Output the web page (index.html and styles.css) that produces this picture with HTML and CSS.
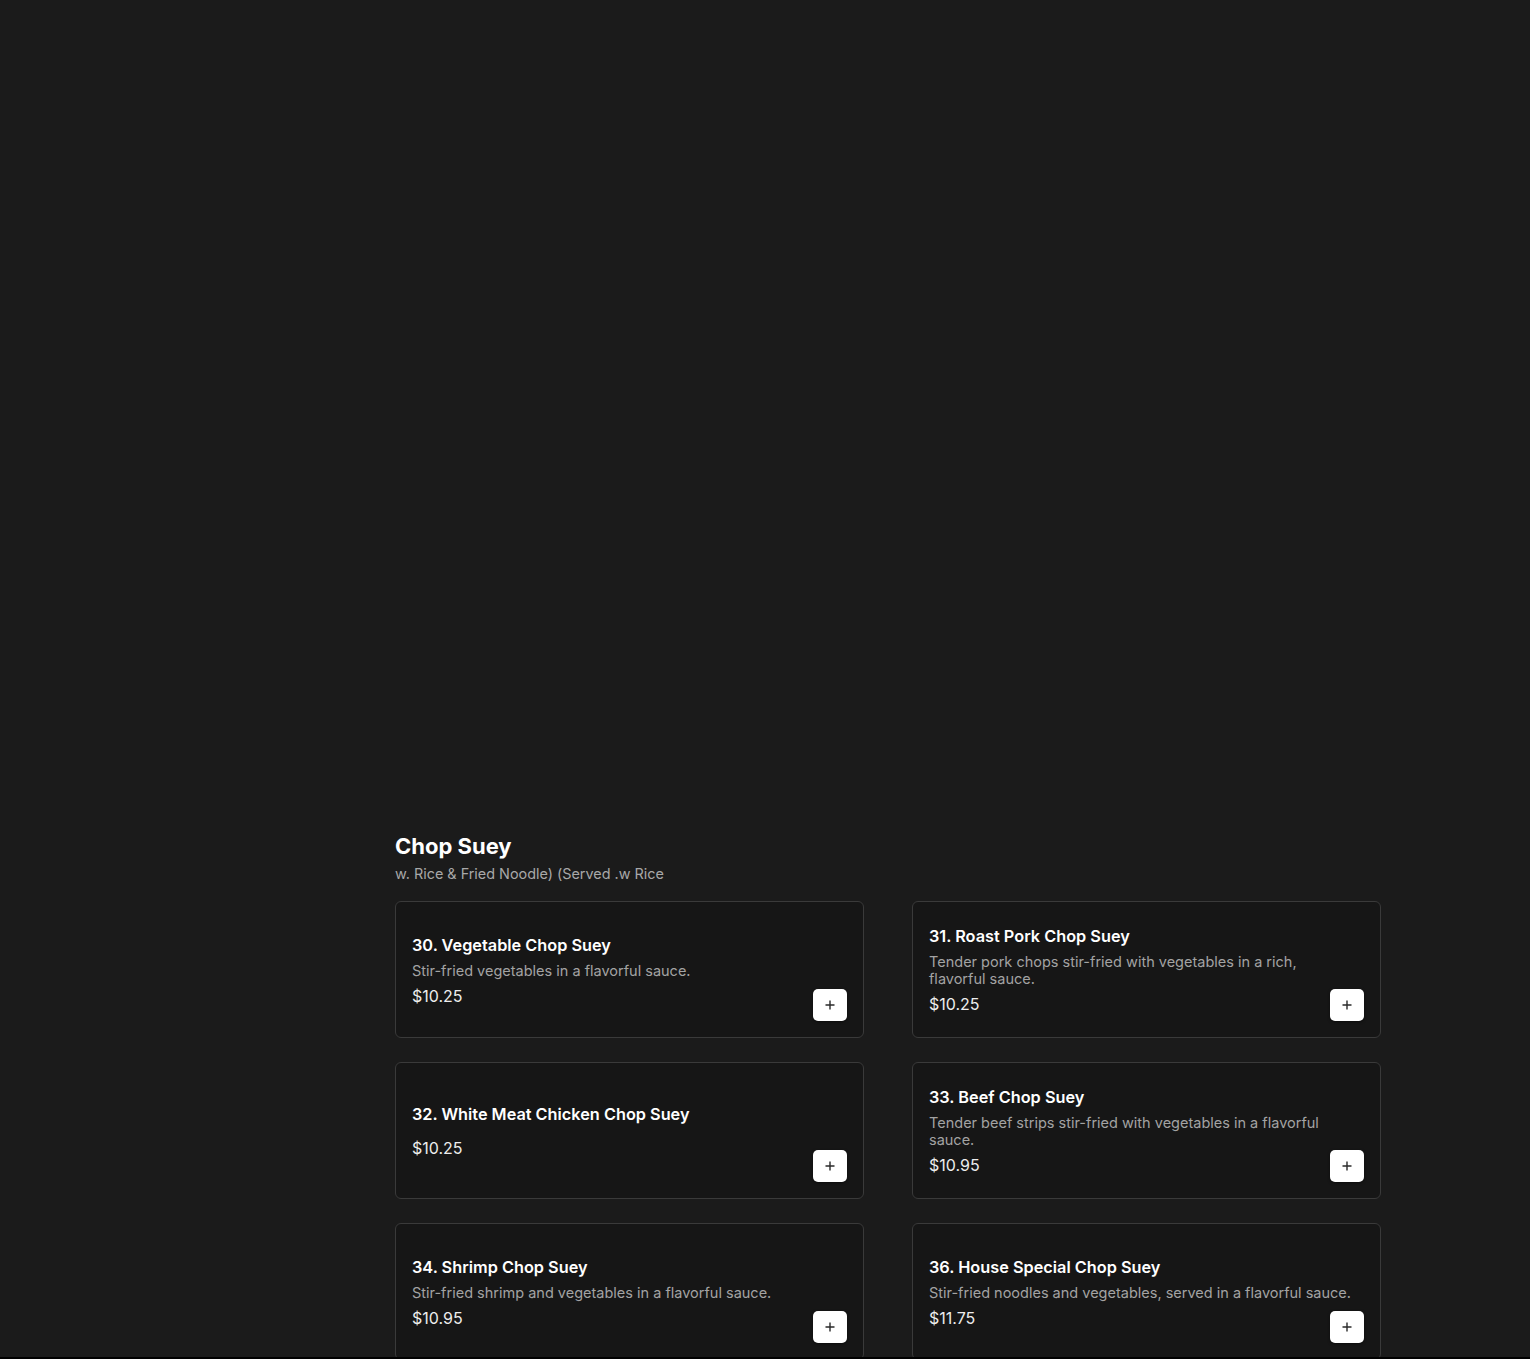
FILE: index.html
```html
<!DOCTYPE html>
<html lang="en">
<head>
  <meta charset="UTF-8" />
  <meta name="viewport" content="width=device-width, initial-scale=1" />
  <title>Chop Suey</title>
  <link rel="stylesheet" href="styles.css">
</head>
<body>
  <div class="page">
    <!-- left column (empty on this view) -->
    <aside class="side"></aside>

    <main class="content">
      <!-- Banner (image not loaded) -->
      <div class="hero"></div>

      <section class="menu-section">
        <h2 class="section-title">Chop Suey</h2>
        <p class="section-note">w. Rice &amp; Fried Noodle) (Served .w Rice</p>

        <div class="menu-grid">
          <div class="menu-card">
            <div class="item-info">
              <h3 class="item-name">30. Vegetable Chop Suey</h3>
              <p class="item-desc">Stir-fried vegetables in a flavorful sauce.</p>
              <div class="item-price">$10.25</div>
            </div>
            <button class="add-btn" aria-label="Add"><svg viewBox="0 0 12 12" width="12" height="12"><path d="M6 1.5v9M1.5 6h9" /></svg></button>
          </div>

          <div class="menu-card">
            <div class="item-info">
              <h3 class="item-name">31. Roast Pork Chop Suey</h3>
              <p class="item-desc">Tender pork chops stir-fried with vegetables in a rich, flavorful sauce.</p>
              <div class="item-price">$10.25</div>
            </div>
            <button class="add-btn" aria-label="Add"><svg viewBox="0 0 12 12" width="12" height="12"><path d="M6 1.5v9M1.5 6h9" /></svg></button>
          </div>

          <div class="menu-card">
            <div class="item-info">
              <h3 class="item-name">32. White Meat Chicken Chop Suey</h3>
              <p class="item-desc"></p>
              <div class="item-price">$10.25</div>
            </div>
            <button class="add-btn" aria-label="Add"><svg viewBox="0 0 12 12" width="12" height="12"><path d="M6 1.5v9M1.5 6h9" /></svg></button>
          </div>

          <div class="menu-card">
            <div class="item-info">
              <h3 class="item-name">33. Beef Chop Suey</h3>
              <p class="item-desc">Tender beef strips stir-fried with vegetables in a flavorful sauce.</p>
              <div class="item-price">$10.95</div>
            </div>
            <button class="add-btn" aria-label="Add"><svg viewBox="0 0 12 12" width="12" height="12"><path d="M6 1.5v9M1.5 6h9" /></svg></button>
          </div>

          <div class="menu-card">
            <div class="item-info">
              <h3 class="item-name">34. Shrimp Chop Suey</h3>
              <p class="item-desc">Stir-fried shrimp and vegetables in a flavorful sauce.</p>
              <div class="item-price">$10.95</div>
            </div>
            <button class="add-btn" aria-label="Add"><svg viewBox="0 0 12 12" width="12" height="12"><path d="M6 1.5v9M1.5 6h9" /></svg></button>
          </div>

          <div class="menu-card">
            <div class="item-info">
              <h3 class="item-name">36. House Special Chop Suey</h3>
              <p class="item-desc">Stir-fried noodles and vegetables, served in a flavorful sauce.</p>
              <div class="item-price">$11.75</div>
            </div>
            <button class="add-btn" aria-label="Add"><svg viewBox="0 0 12 12" width="12" height="12"><path d="M6 1.5v9M1.5 6h9" /></svg></button>
          </div>
        </div>
      </section>
    </main>
  </div>

  <div class="bottom-edge"></div>
</body>
</html>
```

FILE: styles.css
```css
/* dark page */
body {
  margin: 0;
  background-color: #1b1b1b;
  color: #fff;
  font-family: Inter, "Noto Sans", sans-serif;
}
.page {
  display: flex;
}
.side {
  flex: 0 0 246px;
}
.content {
  flex: 1;
}
.hero {
  height: 832px;
}
/* section */
.menu-section {
  width: 986px;
  margin: 0 auto;
  padding-bottom: 40px;
}
.section-title {
  margin: 0;
  font-size: 22px;
  font-weight: 700;
  line-height: 28px;
}
.section-note {
  margin: 4px 0 0;
  font-size: 14.4px;
  line-height: 20px;
  color: #a8a8a8;
}
.menu-grid {
  display: grid;
  grid-template-columns: 1fr 1fr;
  column-gap: 48px;
  row-gap: 24px;
  margin-top: 17px;
}
/* card */
.menu-card {
  position: relative;
  display: flex;
  height: 137px;
  box-sizing: border-box;
  padding: 16px;
  background-color: #161616;
  border: 1px solid #3a3a3a;
  border-radius: 6px;
}
.item-info {
  flex: 1;
  display: flex;
  flex-direction: column;
  justify-content: center;
  padding-right: 10px;
}
.item-name {
  margin: 0;
  font-size: 16.3px;
  font-weight: 600;
  line-height: 24px;
}
.item-desc {
  margin: 5px 0 6px;
  font-size: 14.5px;
  line-height: 17px;
  color: #a3a3a3;
}
.item-price {
  font-size: 16px;
  line-height: 22px;
  color: #ededed;
}
/* add button sits in the corner over the text area */
.add-btn {
  position: absolute;
  right: 16px;
  bottom: 16px;
  display: flex;
  align-items: center;
  justify-content: center;
  width: 34px;
  height: 32px;
  padding: 0;
  border: none;
  border-radius: 5px;
  background-color: #fff;
  box-shadow: 0 1px 3px rgba(0, 0, 0, 0.5);
  cursor: pointer;
}
.add-btn svg {
  stroke: #2a2a2a;
  stroke-width: 1.4;
  fill: none;
}
.bottom-edge {
  position: fixed;
  left: 0;
  right: 0;
  bottom: 0;
  height: 2px;
  background-color: #000;
}
```
